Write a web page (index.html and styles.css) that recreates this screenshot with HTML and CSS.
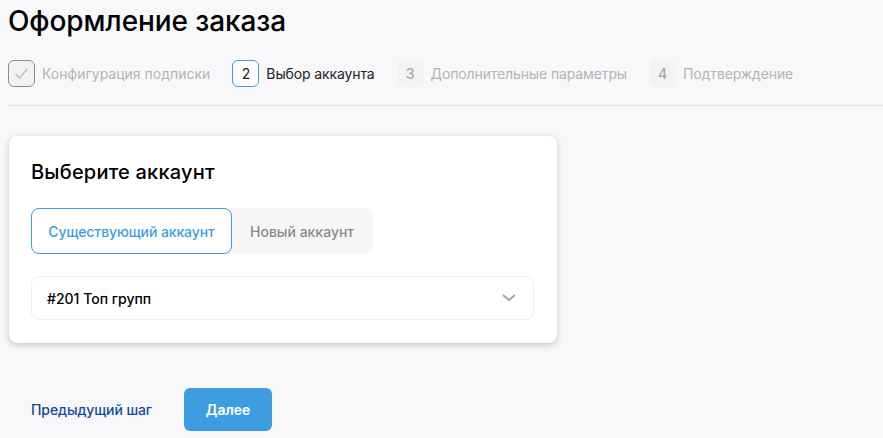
FILE: index.html
```html
<!DOCTYPE html>
<html lang="ru">
<head>
    <meta charset="UTF-8">
    <title>Оформление заказа</title>
    <link rel="stylesheet" href="styles.css">
</head>
<body>
    <h1 class="page-title">Оформление заказа</h1>
    <div class="steps">
        <div class="step step-done">
            <span class="step-num">
                <svg width="15" height="13" viewBox="0 0 15 13" fill="none"><path d="M1.5 7l4 4L13.5 2" stroke="#bdbdbd" stroke-width="1.5"/></svg>
            </span>
            <span class="step-label">Конфигурация подписки</span>
        </div>
        <div class="step step-active">
            <span class="step-num">2</span>
            <span class="step-label">Выбор аккаунта</span>
        </div>
        <div class="step">
            <span class="step-num">3</span>
            <span class="step-label">Дополнительные параметры</span>
        </div>
        <div class="step">
            <span class="step-num">4</span>
            <span class="step-label">Подтверждение</span>
        </div>
    </div>
    <div class="card">
        <h2 class="card-title">Выберите аккаунт</h2>
        <div class="tabs">
            <div class="tab tab-active">Существующий аккаунт</div>
            <div class="tab">Новый аккаунт</div>
        </div>
        <div class="select">
            <span>#201 Топ групп</span>
            <svg width="14" height="8" viewBox="0 0 14 8" fill="none"><path d="M1 1l6 5 6-5" stroke="#a0a0a0" stroke-width="1.8"/></svg>
        </div>
    </div>
    <div class="actions">
        <a class="prev-link" href="#">Предыдущий шаг</a>
        <button class="next-btn" type="button">Далее</button>
    </div>
</body>
</html>
```

FILE: styles.css
```css
body {
    margin: 0;
    padding: 0 0 0 8px;
    height: 438px;
    overflow: hidden;
    background: #f8f8fb;
    font-family: "Inter", "Noto Sans", sans-serif;
    color: #000;
}
.page-title {
    margin: 0;
    padding-top: 5px;
    height: 60px;
    box-sizing: border-box;
    font-size: 28px;
    line-height: 32px;
    font-weight: 500;
    letter-spacing: -0.1px;
}
.steps {
    display: flex;
    gap: 22px;
    height: 45px;
    border-bottom: 1px solid #e2e2e6;
}
.step {
    display: flex;
    align-items: flex-start;
    gap: 7px;
    font-size: 14px;
    line-height: 27px;
    letter-spacing: -0.12px;
    color: #b4b4b4;
}
.step-num {
    width: 27px;
    height: 27px;
    box-sizing: border-box;
    display: flex;
    align-items: center;
    justify-content: center;
    border-radius: 6px;
    background: #f3f3f5;
    font-weight: 500;
    font-size: 14px;
    color: #a8a8a8;
}
.step-done {
    letter-spacing: 0;
}
.step-done .step-num {
    border: 1px solid #8c8c8c;
}
.step-active {
    color: #222;
}
.step-active .step-num {
    background: #fff;
    border: 1px solid #3d9de0;
    color: #222;
    font-weight: 400;
}
.card {
    width: 548px;
    height: 207px;
    box-sizing: border-box;
    margin: 30px 0 0 1px;
    padding: 23px 22px 0;
    background: #fff;
    border-radius: 8px;
    box-shadow: 0 2px 6px rgba(40, 40, 60, 0.24);
}
.card-title {
    margin: 0 0 22px;
    font-size: 20px;
    line-height: 27px;
    font-weight: 500;
    letter-spacing: 0.2px;
}
.tabs {
    display: flex;
    width: 342px;
    height: 46px;
    background: #f6f6f9;
    border-radius: 8px;
}
.tab {
    display: flex;
    align-items: center;
    padding: 0 18px;
    font-size: 14px;
    font-weight: 500;
    color: #8a8a8a;
}
.tab-active {
    width: 201px;
    box-sizing: border-box;
    justify-content: center;
    padding: 0;
    background: #fff;
    border: 1px solid #3d9de0;
    border-radius: 8px;
    color: #3d9de0;
    letter-spacing: -0.1px;
}
.select {
    display: flex;
    align-items: center;
    justify-content: space-between;
    width: 503px;
    height: 44px;
    box-sizing: border-box;
    margin-top: 22px;
    padding: 0 17px 0 15px;
    border: 1px solid #eeeef2;
    border-radius: 8px;
    font-size: 14px;
    font-weight: 500;
}
.actions {
    display: flex;
    align-items: center;
    gap: 32px;
    margin: 45px 0 0 23px;
}
.prev-link {
    font-size: 14px;
    font-weight: 500;
    letter-spacing: -0.1px;
    color: #0f4c9c;
    text-decoration: none;
}
.next-btn {
    width: 88px;
    height: 43px;
    border: none;
    border-radius: 6px;
    background: #3d9de0;
    color: #fff;
    font-family: inherit;
    font-size: 14px;
    font-weight: 600;
}
```
